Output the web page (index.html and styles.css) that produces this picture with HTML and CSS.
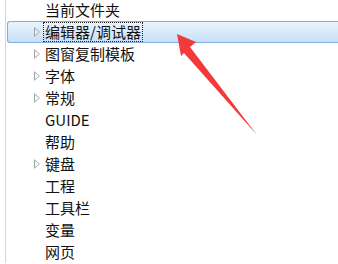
FILE: index.html
```html
<!DOCTYPE html>
<html lang="zh-CN">
<head>
    <meta charset="UTF-8">
    <title>选项</title>
    <link rel="stylesheet" href="styles.css">
</head>
<body>
    <div class="tree">
        <ul class="tree-list">
            <li class="tree-item"><span class="twisty"></span><span class="label">当前文件夹</span></li>
            <li class="tree-item selected"><span class="twisty closed"></span><span class="label focus">编辑器/调试器</span></li>
            <li class="tree-item"><span class="twisty closed"></span><span class="label">图窗复制模板</span></li>
            <li class="tree-item"><span class="twisty closed"></span><span class="label">字体</span></li>
            <li class="tree-item"><span class="twisty closed"></span><span class="label">常规</span></li>
            <li class="tree-item"><span class="twisty"></span><span class="label">GUIDE</span></li>
            <li class="tree-item"><span class="twisty"></span><span class="label">帮助</span></li>
            <li class="tree-item"><span class="twisty closed"></span><span class="label">键盘</span></li>
            <li class="tree-item"><span class="twisty"></span><span class="label">工程</span></li>
            <li class="tree-item"><span class="twisty"></span><span class="label">工具栏</span></li>
            <li class="tree-item"><span class="twisty"></span><span class="label">变量</span></li>
            <li class="tree-item"><span class="twisty"></span><span class="label">网页</span></li>
        </ul>

        <!-- red annotation arrow -->
        <svg class="arrow" width="338" height="264" viewBox="0 0 338 264">
            <polygon points="177,35 196,43 190,48 257,136 184,54 181,57" fill="#f23a3a"/>
        </svg>
    </div>
</body>
</html>
```

FILE: styles.css
```css
html, body {
    margin: 0;
    height: 100%;
    background: #fff;
    overflow: hidden;
}

.tree {
    position: relative;
    height: 100%;
    margin-left: 5px;
    border-left: 1px solid #d6d6d6;
    font-family: "Noto Sans CJK SC", "Noto Sans", sans-serif;
    font-size: 15px;
    color: #111;
}

.tree-list {
    list-style: none;
    margin: -1px 0 0 0;
    padding: 0;
}

.tree-item {
    display: flex;
    align-items: center;
    height: 22px;
    padding-left: 26px;
    margin-left: 1px;
    border: 1px solid transparent;
    border-right: none;
    box-sizing: border-box;
}

.tree-item.selected {
    border-color: #84acdd;
    border-radius: 3px 0 0 3px;
    background: linear-gradient(#eaf4fd, #d5e8fa 60%, #c6e0f8);
}

.twisty {
    position: relative;
    width: 10px;
    height: 10px;
    flex: none;
}

.twisty.closed::before {
    content: "";
    position: absolute;
    left: 0;
    top: 0;
    border-left: 6px solid #a6a6a6;
    border-top: 5px solid transparent;
    border-bottom: 5px solid transparent;
}

.twisty.closed::after {
    content: "";
    position: absolute;
    left: 1px;
    top: 2px;
    border-left: 4px solid #fff;
    border-top: 3px solid transparent;
    border-bottom: 3px solid transparent;
}

.selected .twisty.closed::after {
    border-left-color: #e2eefb;
}

.label {
    line-height: 18px;
    padding: 0 1px;
    white-space: nowrap;
}

.label.focus {
    outline: 1px dotted #222;
    outline-offset: 0;
}

.arrow {
    position: absolute;
    left: -6px;
    top: 0;
    pointer-events: none;
}
```
